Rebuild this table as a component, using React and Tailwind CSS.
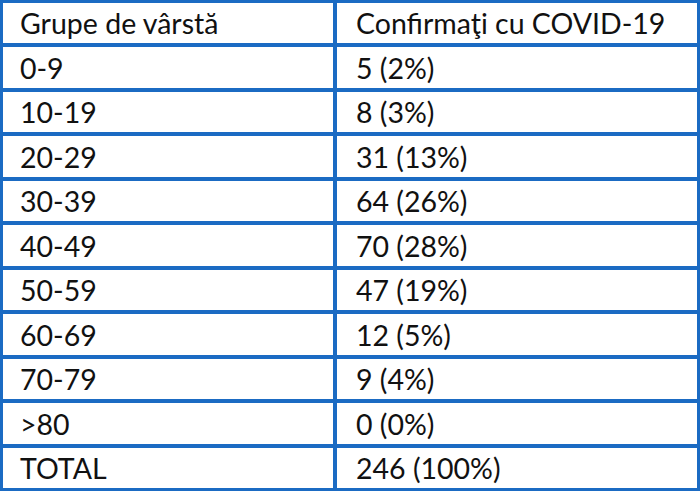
import React from "react";

const rows = [
  ["Grupe de vârstă", "Confirmaţi cu COVID-19"],
  ["0-9", "5 (2%)"],
  ["10-19", "8 (3%)"],
  ["20-29", "31 (13%)"],
  ["30-39", "64 (26%)"],
  ["40-49", "70 (28%)"],
  ["50-59", "47 (19%)"],
  ["60-69", "12 (5%)"],
  ["70-79", "9 (4%)"],
  [">80", "0 (0%)"],
  ["TOTAL", "246 (100%)"],
];

const App = () => {
  return (
    <div className="w-[700px] h-[491px] bg-white">
      {/* blue grid lines come from the gap showing the background */}
      <div
        className="grid grid-cols-[330px_1fr] grid-rows-11 gap-[4px] p-[3px] h-full bg-[#1b6bc3] text-[28.5px] text-[#111111]"
        style={{ fontFamily: "Lato, 'Open Sans', sans-serif" }}
      >
        {rows.map(([age, count]) => (
          <React.Fragment key={age}>
            <div className="bg-white flex items-center pl-[17px] pt-[1px] leading-none">
              {age}
            </div>
            <div className="bg-white flex items-center pl-[19px] pt-[1px] leading-none">
              {count}
            </div>
          </React.Fragment>
        ))}
      </div>
    </div>
  );
};

export default App;
